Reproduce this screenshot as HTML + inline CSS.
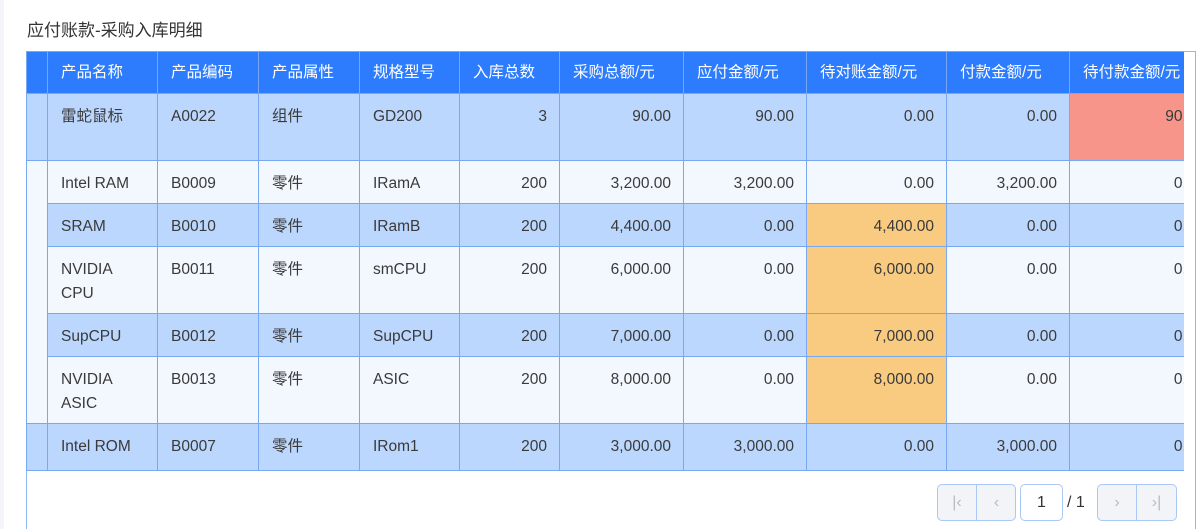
<!DOCTYPE html>
<html><head><meta charset="utf-8"><style>
*{box-sizing:border-box;margin:0;padding:0}
html,body{width:1200px;height:529px;overflow:hidden}
body{background:#fff;font-family:"Liberation Sans","Noto Sans CJK SC",sans-serif;color:#3a3a3a;position:relative}
.strip{position:absolute;left:0;top:0;width:4px;height:529px;background:#f3f5fa}
.title{position:absolute;left:27px;top:16px;font-size:17px;color:#333}
.frame{position:absolute;left:26px;top:51px;width:1170px;height:478px;border:1px solid #8fb6f5;border-bottom:none}
.clip{position:absolute;left:26px;top:51px;width:1158px;height:420px;overflow:hidden}
table{border-collapse:collapse;table-layout:fixed;width:1190px;font-size:15.5px}
td,th{border:1px solid #78a8f4;padding:0 12px 0 13px;vertical-align:top;line-height:24px;padding-top:11px;white-space:nowrap;overflow:hidden}
th{background:#2c7cfd;color:#fff;font-weight:normal;text-align:left;height:42px;padding-top:9px}
.b td{background:#bcd7fd}
.l td{background:#f3f8ff}
td.r{text-align:right}
td.o{background:#f8cb80!important}
td.red{background:#f7958a!important}
td.wrap{white-space:normal}
.pg{position:absolute;top:484px;height:37px;border:1px solid #a9c8f5;border-radius:5px;background:#f2f4f7;color:#bbb;font-size:16px}
.pg span{position:absolute;top:0;width:39px;height:35px;line-height:35px;text-align:center}
</style></head><body>
<div class="strip"></div>
<div class="title">应付账款-采购入库明细</div>
<div class="frame"></div>
<div class="clip"><table>
<colgroup><col style="width:21px"><col style="width:110px"><col style="width:101px"><col style="width:101px"><col style="width:100px"><col style="width:100px"><col style="width:124px"><col style="width:123px"><col style="width:140px"><col style="width:123px"><col style="width:147px"></colgroup>
<tr><th></th><th>产品名称</th><th>产品编码</th><th>产品属性</th><th>规格型号</th><th>入库总数</th><th>采购总额/元</th><th>应付金额/元</th><th>待对账金额/元</th><th>付款金额/元</th><th>待付款金额/元</th></tr>
<tr class="b" style="height:67px"><td></td><td>雷蛇鼠标</td><td>A0022</td><td>组件</td><td>GD200</td><td class="r">3</td><td class="r">90.00</td><td class="r">90.00</td><td class="r">0.00</td><td class="r">0.00</td><td class="r red">90.00</td></tr>
<tr class="l" style="height:43px"><td rowspan="5" style="background:#f3f8ff"></td><td>Intel RAM</td><td>B0009</td><td>零件</td><td>IRamA</td><td class="r">200</td><td class="r">3,200.00</td><td class="r">3,200.00</td><td class="r">0.00</td><td class="r">3,200.00</td><td class="r">0.00</td></tr>
<tr class="b" style="height:43px"><td>SRAM</td><td>B0010</td><td>零件</td><td>IRamB</td><td class="r">200</td><td class="r">4,400.00</td><td class="r">0.00</td><td class="r o">4,400.00</td><td class="r">0.00</td><td class="r">0.00</td></tr>
<tr class="l" style="height:67px"><td class="wrap">NVIDIA<br>CPU</td><td>B0011</td><td>零件</td><td>smCPU</td><td class="r">200</td><td class="r">6,000.00</td><td class="r">0.00</td><td class="r o">6,000.00</td><td class="r">0.00</td><td class="r">0.00</td></tr>
<tr class="b" style="height:43px"><td>SupCPU</td><td>B0012</td><td>零件</td><td>SupCPU</td><td class="r">200</td><td class="r">7,000.00</td><td class="r">0.00</td><td class="r o">7,000.00</td><td class="r">0.00</td><td class="r">0.00</td></tr>
<tr class="l" style="height:67px"><td class="wrap">NVIDIA<br>ASIC</td><td>B0013</td><td>零件</td><td>ASIC</td><td class="r">200</td><td class="r">8,000.00</td><td class="r">0.00</td><td class="r o">8,000.00</td><td class="r">0.00</td><td class="r">0.00</td></tr>
<tr class="b" style="height:47px"><td></td><td>Intel ROM</td><td>B0007</td><td>零件</td><td>IRom1</td><td class="r">200</td><td class="r">3,000.00</td><td class="r">3,000.00</td><td class="r">0.00</td><td class="r">3,000.00</td><td class="r">0.00</td></tr>
</table></div>
<div class="pg" style="left:937px;width:79px"><span style="left:0;border-right:1px solid #a9c8f5">|&lsaquo;</span><span style="left:39px">&lsaquo;</span></div>
<div style="position:absolute;left:1020px;top:484px;width:43px;height:37px;border:1px solid #a9c8f5;border-radius:5px;background:#fff;text-align:center;line-height:35px;font-size:16px;color:#333">1</div>
<div style="position:absolute;left:1067px;top:484px;line-height:37px;font-size:16px;color:#333">/ 1</div>
<div class="pg" style="left:1097px;width:80px"><span style="left:0;border-right:1px solid #a9c8f5">&rsaquo;</span><span style="left:39px">&rsaquo;|</span></div>
</body></html>
